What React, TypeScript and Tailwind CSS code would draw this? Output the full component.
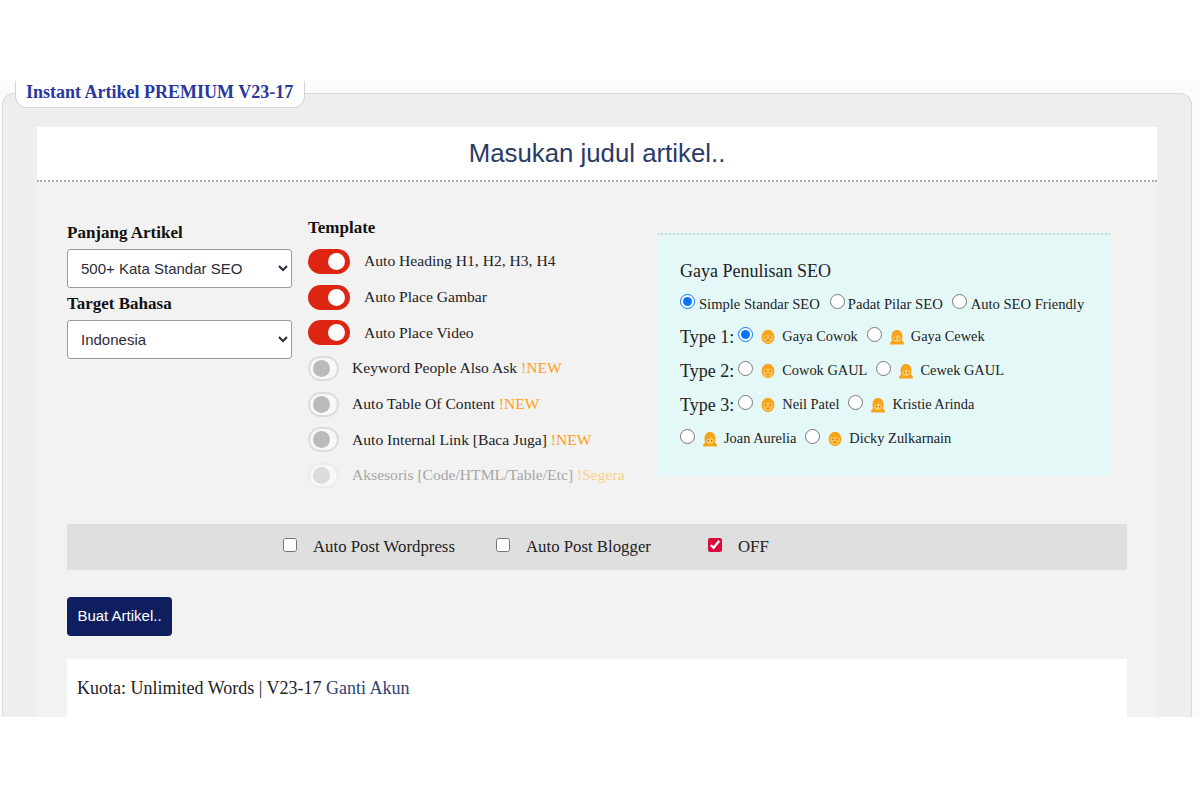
import React from "react";

const Face = ({ girl = false }: { girl?: boolean }) => (
  <svg width="16" height="16" viewBox="0 0 16 16" className="inline-block shrink-0">
    {girl ? (
      <>
        <path d="M1 15.500c0-2.600 1.200-3.600 3-4.200h8c1.800.6 3 1.600 3 4.200z" fill="#f7a41d" />
        <path d="M2.500 7.500C2.500 3.500 4.800 1 8 1s5.500 2.500 5.500 6.500c0 2-.4 3.600-1 5h-9c-.6-1.400-1-3-1-5z" fill="#f7a41d" />
        <ellipse cx="8" cy="9.300" rx="4" ry="3.700" fill="#ffcb5c" />
        <path d="M3.800 8.500c2.300-.2 4.100-.9 5.200-2.500.8 1.400 1.900 2.200 3.200 2.500V5H3.800z" fill="#f7a41d" />
        <circle cx="6.300" cy="9.700" r=".7" fill="#a9581c" />
        <circle cx="9.700" cy="9.700" r=".7" fill="#a9581c" />
      </>
    ) : (
      <>
        <ellipse cx="8" cy="8" rx="6.500" ry="7.200" fill="#f7a41d" />
        <path d="M3.200 6.500c2 .5 3.400-.3 4.800-1.300 1.400 1 2.800 1.800 4.800 1.300v2.300c0 3.500-2.200 5.200-4.800 5.200s-4.800-1.700-4.800-5.200z" fill="#ffbf45" />
        <circle cx="5.900" cy="8.200" r=".7" fill="#a9581c" />
        <circle cx="10.100" cy="8.200" r=".7" fill="#a9581c" />
        <path d="M6.700 11.200h2.600" stroke="#c9611e" strokeWidth="1" />
      </>
    )}
  </svg>
);

const Toggle = ({ on, dim }: { on?: boolean; dim?: boolean }) =>
  on ? (
    <span className="flex h-[25px] w-[42px] shrink-0 items-center justify-end rounded-full bg-[#dd2511] pr-[5px]">
      <span className="h-[17px] w-[17px] rounded-full bg-white" />
    </span>
  ) : (
    <span
      className={`flex h-[25px] w-[31px] shrink-0 items-center rounded-full border-2 bg-[#f8f8f8] pl-[3px] ${
        dim ? "border-[#ececec]" : "border-[#dcdcdc]"
      }`}
    >
      <span className={`h-[17px] w-[17px] rounded-full ${dim ? "bg-[#dcdcdc]" : "bg-[#bababa]"}`} />
    </span>
  );

const Row = ({
  label,
  tag,
  on,
  dim,
}: {
  label: string;
  tag?: string;
  on?: boolean;
  dim?: boolean;
}) => (
  <div className="flex h-[25px] items-center whitespace-nowrap text-[15.6px]">
    <Toggle on={on} dim={dim} />
    <span className={`${on ? "ml-[14px]" : "ml-[13px]"} pb-[1px] ${dim ? "text-[#a6a6a6]" : "text-[#222222]"}`}>
      {label}
      {tag && <span className={dim ? "text-[#fdcf83]" : "text-[#ff9f14]"}> {tag}</span>}
    </span>
  </div>
);

const ModeOption = ({ label, checked, className }: { label: string; checked?: boolean; className: string }) => (
  <label className="flex items-center">
    <input type="radio" name="mode" defaultChecked={checked} className="m-0 h-[15px] w-[15px] shrink-0 -translate-y-[3px]" />
    <span className={className}>{label}</span>
  </label>
);

const Person = ({ name, girl, checked }: { name: string; girl?: boolean; checked?: boolean }) => (
  <label className="flex items-center">
    <input type="radio" name="p" defaultChecked={checked} className="m-0 h-[15px] w-[15px] shrink-0 -translate-y-[2px]" />
    <span className="ml-[7px] mr-[6px] flex">
      <Face girl={girl} />
    </span>
    <span className="text-[14.4px]">{name}</span>
  </label>
);

const TypeRow = ({ title, children }: { title?: string; children: React.ReactNode }) => (
  <div className="flex h-[34px] items-center gap-[9px] whitespace-nowrap">
    {title && <span className="mr-[-5px] text-[18px]">{title}</span>}
    {children}
  </div>
);

const Check = ({ label, checked, className }: { label: string; checked?: boolean; className: string }) => (
  <label className={`flex items-center ${className}`}>
    <input
      type="checkbox"
      defaultChecked={checked}
      className="m-0 h-[14px] w-[14px] shrink-0 -translate-y-[1px] accent-[#dc0a3c]"
    />
    <span className="ml-4 text-[16.8px] text-[#222222]">{label}</span>
  </label>
);

const selectClass =
  "h-[39px] w-full rounded-[3px] border border-[#9a9a9a] bg-white pb-[1px] pl-[9px] font-['Liberation_Sans',sans-serif] text-[15px] text-[#2b2b3a]";

export default function App() {
  return (
    <div className="relative flex h-[800px] w-[1200px] flex-col overflow-hidden bg-white font-['Liberation_Serif',serif] text-[#222222]">
      <div className="h-20 shrink-0" />
      <div className="h-[637px] shrink-0 overflow-hidden bg-[#fbfbfb] pl-[2px] pr-2 pt-[13px]">
        <div className="relative h-[640px] rounded-t-[12px] border border-b-0 border-[#d9d9d9] bg-[#eeeeee] px-[34px] pt-[33px]">
          <div className="absolute left-3 top-[-13px] flex h-[27px] w-[290px] items-center rounded-b-[12px] border border-t-0 border-[#d4d4d4] bg-white pb-[4px] pl-[10px] text-[18px] font-bold text-[#27379f]">
            Instant Artikel PREMIUM V23-17
          </div>

          <div className="w-[1120px] bg-[#f2f2f2]">
            <div className="flex h-[55px] items-center justify-center border-b-2 border-dotted border-[#aaaaaa] bg-white font-['Liberation_Sans',sans-serif] text-[25.8px] text-[#2b3a67]">
              Masukan judul artikel..
            </div>

            <div className="px-[30px]">
              <div className="flex pt-[31px]">
                <div className="w-[225px] shrink-0 pt-[8px]">
                  <div className="h-[28px] text-[17px] font-bold leading-[24px] text-[#111111]">Panjang Artikel</div>
                  <select className={selectClass}>
                    <option>500+ Kata Standar SEO</option>
                  </select>
                  <div className="mt-[7px] h-[25px] text-[17px] font-bold leading-[18px] text-[#111111]">Target Bahasa</div>
                  <select className={selectClass}>
                    <option>Indonesia</option>
                  </select>
                </div>

                <div className="ml-4 w-[350px] shrink-0">
                  <div className="h-[36px] text-[17px] font-bold leading-[30px] text-[#111111]">Template</div>
                  <div className="flex flex-col gap-[10.7px]">
                    <Row on label="Auto Heading H1, H2, H3, H4" />
                    <Row on label="Auto Place Gambar" />
                    <Row on label="Auto Place Video" />
                    <Row label="Keyword People Also Ask" tag="!NEW" />
                    <Row label="Auto Table Of Content" tag="!NEW" />
                    <Row label="Auto Internal Link [Baca Juga]" tag="!NEW" />
                    <Row dim label="Aksesoris [Code/HTML/Table/Etc]" tag="!Segera" />
                  </div>
                </div>

                <div className="mt-[20px] h-[243px] w-[452px] shrink-0 border-t-2 border-dotted border-[#bfe0dc] bg-[#e4f8f8] px-[22px] pt-[24px] text-[#222222]">
                  <div className="h-[31px] text-[18px] leading-[24px]">Gaya Penulisan SEO</div>
                  <div className="flex h-[30px] items-center whitespace-nowrap text-[14.6px]">
                    <ModeOption label="Simple Standar SEO" checked className="ml-[4px] mr-[10px]" />
                    <ModeOption label="Padat Pilar SEO" className="ml-[3px] mr-[9px]" />
                    <ModeOption label="Auto SEO Friendly" className="ml-[4px]" />
                  </div>
                  <TypeRow title="Type 1:">
                    <Person checked name="Gaya Cowok" />
                    <Person girl name="Gaya Cewek" />
                  </TypeRow>
                  <TypeRow title="Type 2:">
                    <Person name="Cowok GAUL" />
                    <Person girl name="Cewek GAUL" />
                  </TypeRow>
                  <TypeRow title="Type 3:">
                    <Person name="Neil Patel" />
                    <Person girl name="Kristie Arinda" />
                  </TypeRow>
                  <TypeRow>
                    <Person girl name="Joan Aurelia" />
                    <Person name="Dicky Zulkarnain" />
                  </TypeRow>
                </div>
              </div>

              <div className="mt-[36px] flex h-[46px] items-center bg-[#dfdfdf] pb-[2px] pl-[216px]">
                <Check label="Auto Post Wordpress" className="w-[213px]" />
                <Check label="Auto Post Blogger" className="w-[212px]" />
                <Check label="OFF" checked className="" />
              </div>

              <button className="mt-[27px] block h-[39px] w-[105px] rounded-[4px] bg-[#0e1e5f] font-['Liberation_Sans',sans-serif] text-[15px] text-white">
                Buat Artikel..
              </button>

              <div className="mt-[23px] h-[80px] bg-white px-[10px] pt-[18px] text-[18px] leading-[22px] text-[#222222]">
                Kuota: Unlimited Words | V23-17 <span className="text-[#2f4274]">Ganti Akun</span>
              </div>
            </div>
          </div>
        </div>
      </div>
    </div>
  );
}
